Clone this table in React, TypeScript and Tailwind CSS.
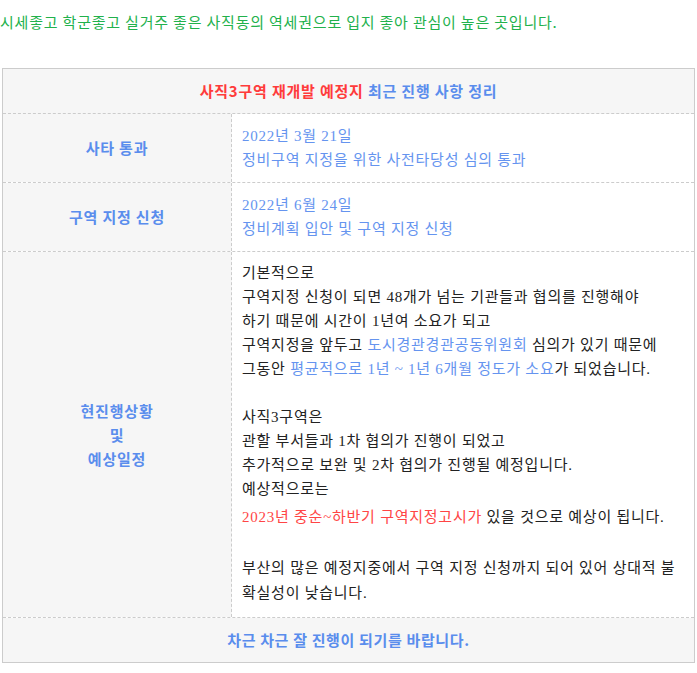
import React from 'react'

const sans = "font-['Noto_Sans_CJK_KR','Noto_Sans',sans-serif]"
const body = "font-['Liberation_Serif','Noto_Sans_CJK_KR',serif] tracking-[0.75px]"

const Label: React.FC<{ children: React.ReactNode }> = ({ children }) => (
  <div className="w-[229px] shrink-0 border-r border-dashed border-[#cccccc] bg-[#f6f6f6] flex items-center justify-center text-center text-[15px] leading-[24px] tracking-[0.8px] font-bold text-[#5a8ded]">
    {children}
  </div>
)

const App: React.FC = () => {
  return (
    <div className={`${sans} bg-white min-h-[673px] w-[697px]`}>
      <p className="pt-[10px] text-[15px] leading-[24px] tracking-[0.8px] text-[#22b14c]">
        시세좋고 학군좋고 실거주 좋은 사직동의 역세권으로 입지 좋아 관심이 높은 곳입니다.
      </p>

      <div className="mt-[34px] ml-[2px] w-[693px] border border-[#cccccc]">
        {/* title */}
        <div className="h-[45px] bg-[#f6f6f6] border-b border-dashed border-[#cccccc] flex items-center justify-center text-[15px] tracking-[0.8px] font-bold">
          <span className="text-[#ff3b3b]">사직3구역 재개발 예정지</span>
          <span className="text-[#5a8ded]">&nbsp;최근 진행 사항 정리</span>
        </div>

        <div className="flex border-b border-dashed border-[#cccccc]">
          <Label>사타 통과</Label>
          <div className={`${body} flex-1 px-[10px] py-[10px] text-[15px] leading-[24px] text-[#6594ef]`}>
            <div>2022년 3월 21일</div>
            <div>정비구역 지정을 위한 사전타당성 심의 통과</div>
          </div>
        </div>

        <div className="flex border-b border-dashed border-[#cccccc]">
          <Label>구역 지정 신청</Label>
          <div className={`${body} flex-1 px-[10px] py-[10px] text-[15px] leading-[24px] text-[#6594ef]`}>
            <div>2022년 6월 24일</div>
            <div>정비계획 입안 및 구역 지정 신청</div>
          </div>
        </div>

        <div className="flex border-b border-dashed border-[#cccccc]">
          <Label>
            <div>
              현진행상황
              <br />및<br />
              예상일정
            </div>
          </Label>
          <div className={`${body} flex-1 pl-[10px] pt-[9px] pb-[11px] text-[15px] leading-[24px] text-[#222222]`}>
            <div>기본적으로</div>
            <div>구역지정 신청이 되면 48개가 넘는 기관들과 협의를 진행해야</div>
            <div>하기 때문에 시간이 1년여 소요가 되고</div>
            <div>
              구역지정을 앞두고 <span className="text-[#6594ef]">도시경관경관공동위원회</span> 심의가 있기 때문에
            </div>
            <div>
              그동안 <span className="text-[#6594ef]">평균적으로 1년 ~ 1년 6개월 정도가 소요</span>가 되었습니다.
            </div>
            <div className="h-[24px]" />
            <div>사직3구역은</div>
            <div>관할 부서들과 1차 협의가 진행이 되었고</div>
            <div>추가적으로 보완 및 2차 협의가 진행될 예정입니다.</div>
            <div>예상적으로는</div>
            <div className="mt-[4px]">
              <span className="text-[#ff4545]">2023년 중순~하반기 구역지정고시가</span> 있을 것으로 예상이 됩니다.
            </div>
            <div className="h-[27px]" />
            <div className="leading-[25px]">
              <div>부산의 많은 예정지중에서 구역 지정 신청까지 되어 있어 상대적 불</div>
              <div>확실성이 낮습니다.</div>
            </div>
          </div>
        </div>

        <div className="h-[44px] bg-[#f6f6f6] flex items-center justify-center text-[15px] tracking-[0.65px] font-bold text-[#5a8ded]">
          차근 차근 잘 진행이 되기를 바랍니다.
        </div>
      </div>
    </div>
  )
}

export default App
